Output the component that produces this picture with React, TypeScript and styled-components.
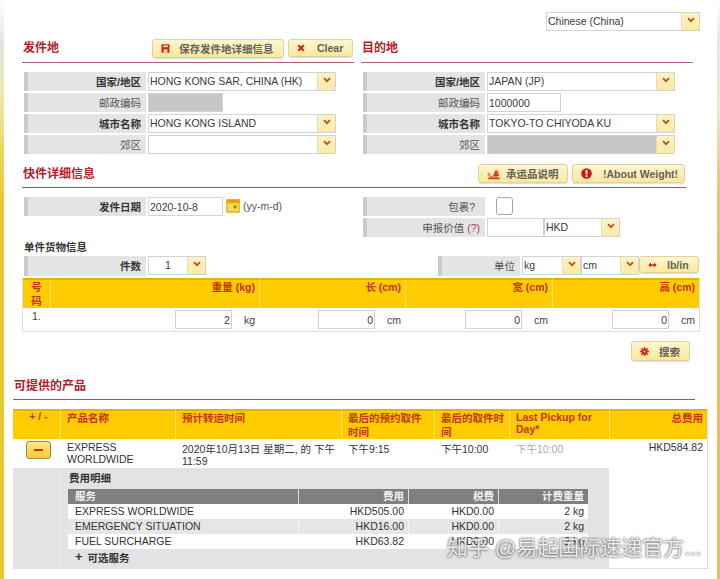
import React from "react";
import styled, { createGlobalStyle } from "styled-components";

const FONT = `"Liberation Sans", "Noto Sans CJK SC", Arial, sans-serif`;

const Global = createGlobalStyle`
  html, body { margin: 0; padding: 0; background: #fff; }
  body { font-family: ${FONT}; font-size: 10.5px; color: #333; }
  * { box-sizing: border-box; }
`;

const Shell = styled.div`
  position: relative;
  width: 720px;
  height: 579px;
  overflow: hidden;
  padding: 3px 3px 0 4px;
  background:
    linear-gradient(#fff 0, #e4e4e4 40px, #eee6b0 100px, #ecd860 150px, #e8c832 200px) left / 4px 100% no-repeat,
    linear-gradient(#fff 0, #e6e6e6 40px, #ece8d0 110px, #e0c878 190px, #dfc05a 300px) right / 3px 100% no-repeat,
    #fff;
`;
const Panel = styled.div`
  height: 100%;
  background: #fff;
  border-radius: 9px 9px 0 0;
  padding: 9px 0 0 18px;
`;
const LangBar = styled.div`
  display: flex;
  justify-content: flex-end;
  padding-right: 17px;
  height: 26px;
`;
const TwoCols = styled.div`
  display: grid;
  grid-template-columns: 332px 332px;
  column-gap: 7px;
`;
const Head = styled.div<{ $w?: number; $h?: number; $mt?: number; $ml?: number; $pt?: number; $rule?: string }>`
  display: flex;
  align-items: center;
  justify-content: space-between;
  width: ${(p) => (p.$w ? `${p.$w}px` : "auto")};
  height: ${(p) => p.$h ?? 25}px;
  margin-top: ${(p) => p.$mt ?? 0}px;
  margin-left: ${(p) => p.$ml ?? 0}px;
  padding: ${(p) => p.$pt ?? 0}px 0 4px;
  border-bottom: 1px solid ${(p) => p.$rule ?? "#ae6470"};
`;
const Title = styled.h2`
  margin: 0;
  padding-left: 1px;
  font-size: 12px;
  line-height: 16px;
  font-weight: 700;
  color: #b5202c;
`;
const ButtonRow = styled.div`
  display: flex;
  align-items: center;
  gap: 4px;
  padding-right: 1px;
`;
const Button = styled.button<{ $w: number; $h?: number }>`
  display: flex;
  align-items: center;
  width: ${(p) => p.$w}px;
  height: ${(p) => p.$h ?? 19}px;
  padding: 0 0 0 8px;
  border: 1px solid #e0d0a0;
  border-radius: 3px;
  background: linear-gradient(#fff6d2, #fbe89c);
  box-shadow: 0 1px 1px #ddd;
  font-family: ${FONT};
  font-size: 10.5px;
  font-weight: 700;
  color: #62625a;
  white-space: nowrap;
`;
const ButtonIcon = styled.span<{ $w: number }>`
  display: flex;
  align-items: center;
  flex: none;
  width: ${(p) => p.$w}px;
`;
const Rows = styled.div<{ $mt?: number }>`
  display: flex;
  flex-direction: column;
  gap: 2px;
  margin-top: ${(p) => p.$mt ?? 9}px;
`;
const Row = styled.div`
  display: flex;
  align-items: flex-start;
  gap: 2px;
  height: 19px;
`;
const Label = styled.div<{ $bold?: boolean; $w?: number; $ml?: number; $pr?: number }>`
  flex: none;
  width: ${(p) => p.$w ?? 122}px;
  height: 19px;
  margin-left: ${(p) => p.$ml ?? 2}px;
  padding-right: ${(p) => p.$pr ?? 5}px;
  border-left: 4px solid #cbcbcb;
  background: #e4e4e4;
  text-align: right;
  font-size: 10.5px;
  line-height: 20px;
  font-weight: ${(p) => (p.$bold ? 700 : 400)};
  color: ${(p) => (p.$bold ? "#333" : "#555")};
`;
const Hint = styled.span`
  color: #a04a58;
`;
const Select = styled.div<{ $w: number; $disabled?: boolean; $h?: number }>`
  flex: none;
  display: flex;
  width: ${(p) => p.$w}px;
  height: ${(p) => p.$h ?? 19}px;
  border: 1px solid #d2d2d2;
  background: ${(p) => (p.$disabled ? "#c6c6c6" : "#fff")};
  font-size: 10.5px;
  line-height: 17px;
  color: #3a3a3a;
`;
const SelectText = styled.span<{ $center?: boolean }>`
  flex: 1;
  min-width: 0;
  padding-left: ${(p) => (p.$center ? 0 : 1)}px;
  text-align: ${(p) => (p.$center ? "center" : "left")};
  white-space: nowrap;
  overflow: hidden;
`;
const SelectArrow = styled.span`
  flex: none;
  display: flex;
  align-items: center;
  justify-content: center;
  width: 18px;
  padding-bottom: 3px;
  border-left: 1px solid #e4dcb8;
  background: linear-gradient(#fff3c4, #fde9a2);
`;
const Field = styled.input<{ $w: number; $right?: boolean; $disabled?: boolean }>`
  flex: none;
  display: block;
  width: ${(p) => p.$w}px;
  height: 19px;
  padding: 0 1px;
  border: 1px solid #d2d2d2;
  border-radius: 0;
  outline: none;
  background: ${(p) => (p.$disabled ? "#c6c6c6" : "#fff")};
  font-family: ${FONT};
  font-size: 10.5px;
  color: #3a3a3a;
  text-align: ${(p) => (p.$right ? "right" : "left")};
`;
const DateHint = styled.span`
  display: flex;
  align-items: center;
  gap: 3px;
  height: 17px;
  margin-left: 1px;
  color: #555;
  font-size: 10.5px;
`;
const Check = styled.span`
  flex: none;
  width: 17px;
  height: 18px;
  margin-left: 9px;
  border: 1px solid #a8a8a8;
  border-radius: 3px;
  background: #fff;
`;
const SubTitle = styled.div`
  height: 18px;
  margin: 1px 0 0 2px;
  font-size: 10.5px;
  line-height: 18px;
  font-weight: 700;
  color: #333;
`;
const PieceRow = styled.div`
  display: flex;
  align-items: flex-start;
  justify-content: space-between;
  width: 677px;
  height: 22px;
`;
const Group = styled.div`
  display: flex;
  align-items: flex-start;
  gap: 2px;
`;
const TallLabel = styled(Label)`
  height: 20px;
`;
const TightControls = styled.div`
  display: flex;
`;
const PieceTable = styled.div`
  display: grid;
  grid-template-columns: 27px 209px 146px 147px 147px;
  width: 678px;
  border-right: 1px solid #ddd;
  border-left: 1px solid #ddd;
  border-bottom: 1px solid #ddd;
`;
const HeadCell = styled.div<{ $right?: boolean; $center?: boolean; $first?: boolean }>`
  min-height: 30px;
  padding: ${(p) => (p.$center ? "0 4px" : "0 4px 0 7px")};
  border-top: 2px solid #e2b400;
  border-left: ${(p) => (p.$first ? "none" : "1px solid #ffe070")};
  background: #ffcc00;
  font-size: 10.5px;
  line-height: 14px;
  font-weight: 700;
  color: #c4340c;
  text-align: ${(p) => (p.$right ? "right" : p.$center ? "center" : "left")};
`;
const NoCell = styled.div`
  height: 23px;
  padding-top: 2px;
  text-align: center;
  color: #444;
`;
const DimCell = styled.div`
  display: flex;
  align-items: flex-start;
  justify-content: flex-end;
  height: 23px;
  padding-top: 2px;
`;
const Unit = styled.span`
  padding: 3px 4px 0 12px;
  line-height: 14px;
  color: #444;
`;
const SearchRow = styled.div`
  display: flex;
  justify-content: flex-end;
  width: 668px;
  height: 20px;
  margin-top: 9px;
`;
const ResultGrid = styled.div`
  display: grid;
  grid-template-columns: 47px 115px 166px 93px 75px 100px 98px;
  width: 695px;
  margin: 9px 0 0 -9px;
  border-right: 1px solid #ddd;
`;
const ResHead = styled(HeadCell)`
  padding: 0 4px 0 6px;
`;
const ToggleHead = styled(HeadCell)`
  padding: 0 0 0 4px;
  line-height: 10px;
`;
const LatinHead = styled(ResHead)`
  line-height: 12px;
`;
const ResCell = styled.div<{ $right?: boolean; $muted?: boolean; $pt?: number }>`
  height: 29px;
  padding: ${(p) => p.$pt ?? 4}px 4px 0 7px;
  font-size: 10.5px;
  line-height: 12px;
  color: ${(p) => (p.$muted ? "#aaa" : "#333")};
  text-align: ${(p) => (p.$right ? "right" : "left")};
`;
const ToggleCell = styled.div`
  display: flex;
  justify-content: center;
  padding: 2px 0 0 4px;
`;
const Toggle = styled.span`
  display: flex;
  align-items: center;
  justify-content: center;
  width: 25px;
  height: 18px;
  border: 1px solid #9a8a50;
  border-radius: 3px;
  background: linear-gradient(#ffe680, #fbcb2c);
  &::before {
    content: "";
    width: 9px;
    height: 2px;
    background: #d8300f;
  }
`;
const DetailGutter = styled.div`
  height: 101px;
  border-right: 1px solid #eee;
  background: #e3e3e5;
`;
const Detail = styled.div`
  grid-column: 2 / span 5;
  height: 101px;
  padding: 0 0 0 8px;
  background: #e3e3e5;
`;
const DetailBlank = styled.div`
  height: 101px;
  border-bottom: 1px solid #ddd;
`;
const DetailTitle = styled.div`
  height: 21px;
  padding-left: 1px;
  font-size: 10.5px;
  line-height: 21px;
  font-weight: 700;
  color: #333;
`;
const FeeTable = styled.div`
  display: grid;
  grid-template-columns: 230px 110px 90px 90px;
  grid-auto-rows: 15px;
  width: 520px;
`;
const FeeHead = styled.div<{ $right?: boolean }>`
  padding: 0 4px 0 7px;
  border-left: 1px solid #ddd;
  background: #7f7f7f;
  color: #f2f2f2;
  font-size: 10.5px;
  line-height: 15px;
  font-weight: 700;
  text-align: ${(p) => (p.$right ? "right" : "left")};
  &:first-child { border-left: none; }
`;
const FeeCell = styled.div<{ $right?: boolean; $alt?: boolean }>`
  padding: 0 4px 0 7px;
  border-left: ${(p) => (p.$alt ? "1px solid #f4f4f4" : "none")};
  background: ${(p) => (p.$alt ? "#e6e6e6" : "#fff")};
  font-size: 10.5px;
  line-height: 15px;
  color: #333;
  text-align: ${(p) => (p.$right ? "right" : "left")};
  &:nth-child(4n + 1) { border-left: none; }
`;
const Optional = styled.div`
  display: flex;
  align-items: center;
  gap: 5px;
  height: 17px;
  margin-left: 7px;
  font-size: 10.5px;
  font-weight: 700;
  color: #333;
`;
const Plus = styled.span`
  font-size: 13px;
  line-height: 13px;
  margin-top: -2px;
`;
const Watermark = styled.div`
  position: absolute;
  left: 447px;
  top: 535px;
  font-size: 21px;
  line-height: 26px;
  white-space: nowrap;
  color: rgba(250, 250, 250, 0.92);
  text-shadow: 0 0 2px rgba(40, 40, 40, 0.8), 0 0 3px rgba(60, 60, 60, 0.5);
`;

const Chevron = () => (
  <svg width="8" height="6" viewBox="0 0 8 6">
    <path d="M1 1.2 L4 4.2 L7 1.2" fill="none" stroke="#b5501c" strokeWidth="1.7" />
  </svg>
);
const SaveIcon = () => (
  <svg width="9" height="9" viewBox="0 0 9 9">
    <path d="M0.5 1 Q0.5 0.3 1.2 0.3 H7.8 Q8.5 0.3 8.5 1 V8.7 H0.5Z" fill="#d0231f" />
    <rect x="2.2" y="1.4" width="4.6" height="1.8" fill="#fbe89c" />
    <rect x="2.6" y="5.4" width="3.8" height="3.3" fill="#fbe89c" />
  </svg>
);
const CrossIcon = () => (
  <svg width="8" height="8" viewBox="0 0 8 8">
    <path d="M1.2 1.2 L6.8 6.8 M6.8 1.2 L1.2 6.8" stroke="#c8261c" strokeWidth="2" />
  </svg>
);
const CargoIcon = () => (
  <svg width="14" height="12" viewBox="0 0 14 12">
    <path d="M1 5 L3.5 9 H11" fill="none" stroke="#e8742a" strokeWidth="1.6" />
    <path d="M6 8 L9 1.2 L12.4 8Z" fill="#d8382a" />
    <circle cx="10.5" cy="4" r="1.2" fill="#e8742a" />
    <rect x="1" y="9.6" width="12" height="1.6" fill="#d8382a" />
  </svg>
);
const AlertIcon = () => (
  <svg width="11" height="11" viewBox="0 0 11 11">
    <circle cx="5.5" cy="5.5" r="5.3" fill="#cc1818" />
    <rect x="4.6" y="2" width="1.8" height="4.4" fill="#fff" />
    <rect x="4.6" y="7.2" width="1.8" height="1.7" fill="#fff" />
  </svg>
);
const CalendarIcon = () => (
  <svg width="14" height="14" viewBox="0 0 14 14">
    <rect x="0.3" y="0.3" width="13.4" height="13.4" rx="1.5" fill="#f8c81c" stroke="#e09a10" strokeWidth="0.6" />
    <rect x="0.6" y="0.6" width="12.8" height="3" fill="#f09a10" />
    <rect x="2" y="5" width="10" height="6.6" fill="#f0dc60" />
    <rect x="7.6" y="6.4" width="3" height="3" fill="#7c9a30" />
  </svg>
);
const SwapIcon = () => (
  <svg width="9" height="6" viewBox="0 0 9 6">
    <path d="M0.3 3 L3 0.4 V2.2 H6 V0.4 L8.7 3 L6 5.6 V3.8 H3 V5.6Z" fill="#c8201c" />
  </svg>
);
const GearIcon = () => (
  <svg width="9" height="9" viewBox="0 0 9 9">
    <circle cx="4.5" cy="4.5" r="3.1" fill="#d0201c" />
    <path d="M4.5 0 V9 M0 4.5 H9 M1.3 1.3 L7.7 7.7 M7.7 1.3 L1.3 7.7" stroke="#d0201c" strokeWidth="1.3" />
    <circle cx="4.5" cy="4.5" r="0.9" fill="#fbe89c" />
  </svg>
);

const Dropdown = ({ w, text, disabled, center, h }: { w: number; text?: string; disabled?: boolean; center?: boolean; h?: number }) => (
  <Select $w={w} $disabled={disabled} $h={h}>
    <SelectText $center={center}>{text}</SelectText>
    <SelectArrow><Chevron /></SelectArrow>
  </Select>
);

const Dim = ({ w, value, unit }: { w: number; value: string; unit: string }) => (
  <DimCell>
    <Field $w={w} $right readOnly value={value} />
    <Unit>{unit}</Unit>
  </DimCell>
);

const fees = [
  ["EXPRESS WORLDWIDE", "HKD505.00", "HKD0.00", "2 kg"],
  ["EMERGENCY SITUATION", "HKD16.00", "HKD0.00", "2 kg"],
  ["FUEL SURCHARGE", "HKD63.82", "HKD0.00", "2 kg"],
];

export default function App() {
  return (
    <Shell>
      <Global />
      <Panel>
        <LangBar>
          <Dropdown w={154} text="Chinese (China)" />
        </LangBar>
        <TwoCols>
          <div>
            <Head>
              <Title>发件地</Title>
              <ButtonRow>
                <Button $w={132}>
                  <ButtonIcon $w={18}><SaveIcon /></ButtonIcon>保存发件地详细信息
                </Button>
                <Button $w={65} $h={18}>
                  <ButtonIcon $w={20}><CrossIcon /></ButtonIcon>Clear
                </Button>
              </ButtonRow>
            </Head>
            <Rows>
              <Row><Label $bold>国家/地区</Label><Dropdown w={188} text="HONG KONG SAR, CHINA (HK)" /></Row>
              <Row><Label>邮政编码</Label><Field $w={75} $disabled readOnly value="" /></Row>
              <Row><Label $bold>城市名称</Label><Dropdown w={188} text="HONG KONG ISLAND" /></Row>
              <Row><Label>郊区</Label><Dropdown w={188} /></Row>
            </Rows>
          </div>
          <div>
            <Head>
              <Title>目的地</Title>
            </Head>
            <Rows>
              <Row><Label $bold>国家/地区</Label><Dropdown w={188} text="JAPAN (JP)" /></Row>
              <Row><Label>邮政编码</Label><Field $w={74} readOnly value="1000000" /></Row>
              <Row><Label $bold>城市名称</Label><Dropdown w={188} text="TOKYO-TO CHIYODA KU" /></Row>
              <Row><Label>郊区</Label><Dropdown w={188} disabled /></Row>
            </Rows>
          </div>
        </TwoCols>

        <Head $w={664} $h={24} $mt={10} $rule="#bc4454">
          <Title>快件详细信息</Title>
          <ButtonRow>
            <Button $w={90}>
              <ButtonIcon $w={19}><CargoIcon /></ButtonIcon>承运品说明
            </Button>
            <Button $w={113}>
              <ButtonIcon $w={22}><AlertIcon /></ButtonIcon>!About Weight!
            </Button>
          </ButtonRow>
        </Head>

        <TwoCols>
          <Rows>
            <Row>
              <Label $bold>发件日期</Label>
              <Field $w={75} readOnly value="2020-10-8" />
              <DateHint><CalendarIcon />(yy-m-d)</DateHint>
            </Row>
          </Rows>
          <Rows>
            <Row><Label $pr={10}>包裹?</Label><Check /></Row>
            <Row>
              <Label>申报价值 <Hint>(?)</Hint></Label>
              <TightControls>
                <Field $w={57} readOnly value="" />
                <Dropdown w={76} text="HKD" />
              </TightControls>
            </Row>
          </Rows>
        </TwoCols>

        <SubTitle>单件货物信息</SubTitle>
        <PieceRow>
          <Group>
            <TallLabel $bold>件数</TallLabel>
            <Dropdown w={58} text="1" center />
          </Group>
          <Group>
            <TallLabel $w={82} $ml={0}>单位</TallLabel>
            <TightControls>
              <Dropdown w={59} text="kg" />
              <Dropdown w={58} text="cm" />
              <Button $w={60} $h={17}>
                <ButtonIcon $w={19}><SwapIcon /></ButtonIcon>lb/in
              </Button>
            </TightControls>
          </Group>
        </PieceRow>

        <PieceTable>
          <HeadCell $center $first>号码</HeadCell>
          <HeadCell $right>重量 (kg)</HeadCell>
          <HeadCell $right>长 (cm)</HeadCell>
          <HeadCell $right>宽 (cm)</HeadCell>
          <HeadCell $right>高 (cm)</HeadCell>
          <NoCell>1.</NoCell>
          <Dim w={57} value="2" unit="kg" />
          <Dim w={57} value="0" unit="cm" />
          <Dim w={57} value="0" unit="cm" />
          <Dim w={57} value="0" unit="cm" />
        </PieceTable>

        <SearchRow>
          <Button $w={59} $h={20}>
            <ButtonIcon $w={19}><GearIcon /></ButtonIcon>搜索
          </Button>
        </SearchRow>

        <Head $w={682} $h={39} $pt={15} $ml={-9} $rule="#8e5c66">
          <Title>可提供的产品</Title>
        </Head>

        <ResultGrid>
          <ToggleHead $center $first>+ / -</ToggleHead>
          <ResHead>产品名称</ResHead>
          <ResHead>预计转运时间</ResHead>
          <ResHead>最后的预约取件时间</ResHead>
          <ResHead>最后的取件时间</ResHead>
          <LatinHead>Last Pickup for Day*</LatinHead>
          <ResHead $right>总费用</ResHead>

          <ToggleCell><Toggle /></ToggleCell>
          <ResCell $pt={2}>EXPRESS WORLDWIDE</ResCell>
          <ResCell>2020年10月13日 星期二, 的 下午 11:59</ResCell>
          <ResCell>下午9:15</ResCell>
          <ResCell>下午10:00</ResCell>
          <ResCell $muted>下午10:00</ResCell>
          <ResCell $right $pt={2}>HKD584.82</ResCell>

          <DetailGutter />
          <Detail>
            <DetailTitle>费用明细</DetailTitle>
            <FeeTable>
              <FeeHead>服务</FeeHead>
              <FeeHead $right>费用</FeeHead>
              <FeeHead $right>税费</FeeHead>
              <FeeHead $right>计费重量</FeeHead>
              {fees.map((row, i) =>
                row.map((v, j) => (
                  <FeeCell key={`${i}-${j}`} $right={j > 0} $alt={i === 1}>{v}</FeeCell>
                ))
              )}
            </FeeTable>
            <Optional><Plus>+</Plus>可选服务</Optional>
          </Detail>
          <DetailBlank />
        </ResultGrid>
      </Panel>
      <Watermark>知乎 @易起国际速递官方...</Watermark>
    </Shell>
  );
}
